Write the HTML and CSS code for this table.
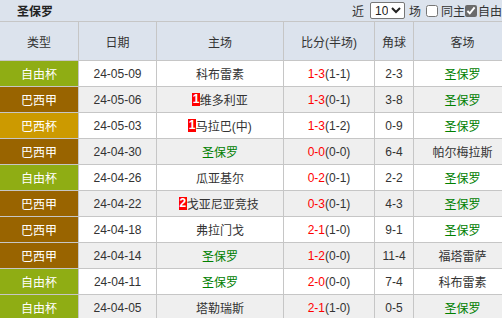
FILE: index.html
```html
<!DOCTYPE html>
<html lang="zh">
<head>
<meta charset="utf-8">
<title>圣保罗</title>
<link rel="stylesheet" href="styles.css">
</head>
<body>
<div class="wrap">
  <div class="titlebar">
    <div class="title">圣保罗</div>
    <div class="controls">
      <span>近</span>
      <select class="sel"><option>10</option></select>
      <span>场</span>
      <input type="checkbox" class="cb">
      <span>同主</span>
      <input type="checkbox" class="cb cb-on" checked>
      <span>自由杯</span>
    </div>
  </div>
  <div class="table">
    <div class="row head">
      <div>类型</div><div>日期</div><div>主场</div><div>比分(半场)</div><div>角球</div><div>客场</div>
    </div>
    <div class="row">
      <div class="lg lib">自由杯</div><div>24-05-09</div><div>科布雷素</div><div><span class="r">1-3</span>(1-1)</div><div>2-3</div><div class="g">圣保罗</div>
    </div>
    <div class="row alt">
      <div class="lg bra">巴西甲</div><div>24-05-06</div><div><span class="card">1</span>维多利亚</div><div><span class="r">1-3</span>(0-1)</div><div>3-8</div><div class="g">圣保罗</div>
    </div>
    <div class="row">
      <div class="lg cup">巴西杯</div><div>24-05-03</div><div><span class="card">1</span>马拉巴(中)</div><div><span class="r">1-3</span>(1-2)</div><div>0-9</div><div class="g">圣保罗</div>
    </div>
    <div class="row alt">
      <div class="lg bra">巴西甲</div><div>24-04-30</div><div class="g">圣保罗</div><div><span class="r">0-0</span>(0-0)</div><div>6-4</div><div>帕尔梅拉斯</div>
    </div>
    <div class="row">
      <div class="lg lib">自由杯</div><div>24-04-26</div><div>瓜亚基尔</div><div><span class="r">0-2</span>(0-1)</div><div>2-2</div><div class="g">圣保罗</div>
    </div>
    <div class="row alt">
      <div class="lg bra">巴西甲</div><div>24-04-22</div><div class="clip"><span class="card">2</span>戈亚尼亚竞技</div><div><span class="r">0-3</span>(0-1)</div><div>4-3</div><div class="g">圣保罗</div>
    </div>
    <div class="row">
      <div class="lg bra">巴西甲</div><div>24-04-18</div><div>弗拉门戈</div><div><span class="r">2-1</span>(1-0)</div><div>9-1</div><div class="g">圣保罗</div>
    </div>
    <div class="row alt">
      <div class="lg bra">巴西甲</div><div>24-04-14</div><div class="g">圣保罗</div><div><span class="r">1-2</span>(0-0)</div><div>11-4</div><div>福塔雷萨</div>
    </div>
    <div class="row">
      <div class="lg lib">自由杯</div><div>24-04-11</div><div class="g">圣保罗</div><div><span class="r">2-0</span>(0-0)</div><div>7-4</div><div>科布雷素</div>
    </div>
    <div class="row alt">
      <div class="lg lib">自由杯</div><div>24-04-05</div><div>塔勒瑞斯</div><div><span class="r">2-1</span>(1-0)</div><div>0-5</div><div class="g">圣保罗</div>
    </div>
  </div>
</div>
</body>
</html>
```

FILE: styles.css
```css
html, body {
  margin: 0;
  padding: 0;
  overflow: hidden;
}
body {
  font-family: "Liberation Sans", "Noto Sans CJK SC", sans-serif;
  font-size: 12px;
  color: #333;
  background: #fff;
}
.wrap {
  width: 520px;
}
.titlebar {
  display: flex;
  align-items: center;
  height: 21px;
  background: #dce3ed;
}
.title {
  flex: 0 0 352px;
  box-sizing: border-box;
  padding-left: 17px;
  font-weight: bold;
  color: #222;
}
.controls {
  display: flex;
  align-items: center;
  white-space: nowrap;
  color: #333;
}
.sel {
  margin: 0 4px 0 6px;
  width: 35px;
  height: 17px;
  padding: 0;
  font-family: "Liberation Sans", sans-serif;
  font-size: 12px;
  color: #222;
  border: 1px solid #777;
  border-radius: 2px;
  background: #fff;
}
.cb {
  width: 12px;
  height: 12px;
  margin: 0 3px 0 5px;
}
.cb-on {
  margin: 0 1px 0 0;
  accent-color: #6b6b6b;
}
.table {
  display: flex;
  flex-direction: column;
  gap: 1px;
  background: #c6c6c6;
  border-top: 1px solid #c6c6c6;
}
.row {
  display: grid;
  grid-template-columns: 78px 77px 126px 90px 38px 97px;
  column-gap: 1px;
  height: 25px;
}
.row > div {
  display: flex;
  align-items: center;
  justify-content: center;
  background: #fff;
  color: #333;
  white-space: nowrap;
  overflow: hidden;
}
.row.alt > div {
  background: #efefef;
}
.row.head {
  height: 38px;
}
.row.head > div {
  background: #dce3ed;
  color: #333;
}
.row > div.lg {
  color: #fff;
}
.row > div.lib { background: #8fad14; }
.row > div.bra { background: #996400; }
.row > div.cup { background: #cc9a00; }
.row > div.g { color: #008000; }
.row > div.clip { justify-content: flex-start; padding-left: 22px; }
.r { color: #f00; }
.card {
  display: inline-block;
  background: #f00;
  color: #fff;
  font-weight: bold;
  font-size: 12px;
  line-height: 13px;
  padding: 0 0.5px;
}
```
